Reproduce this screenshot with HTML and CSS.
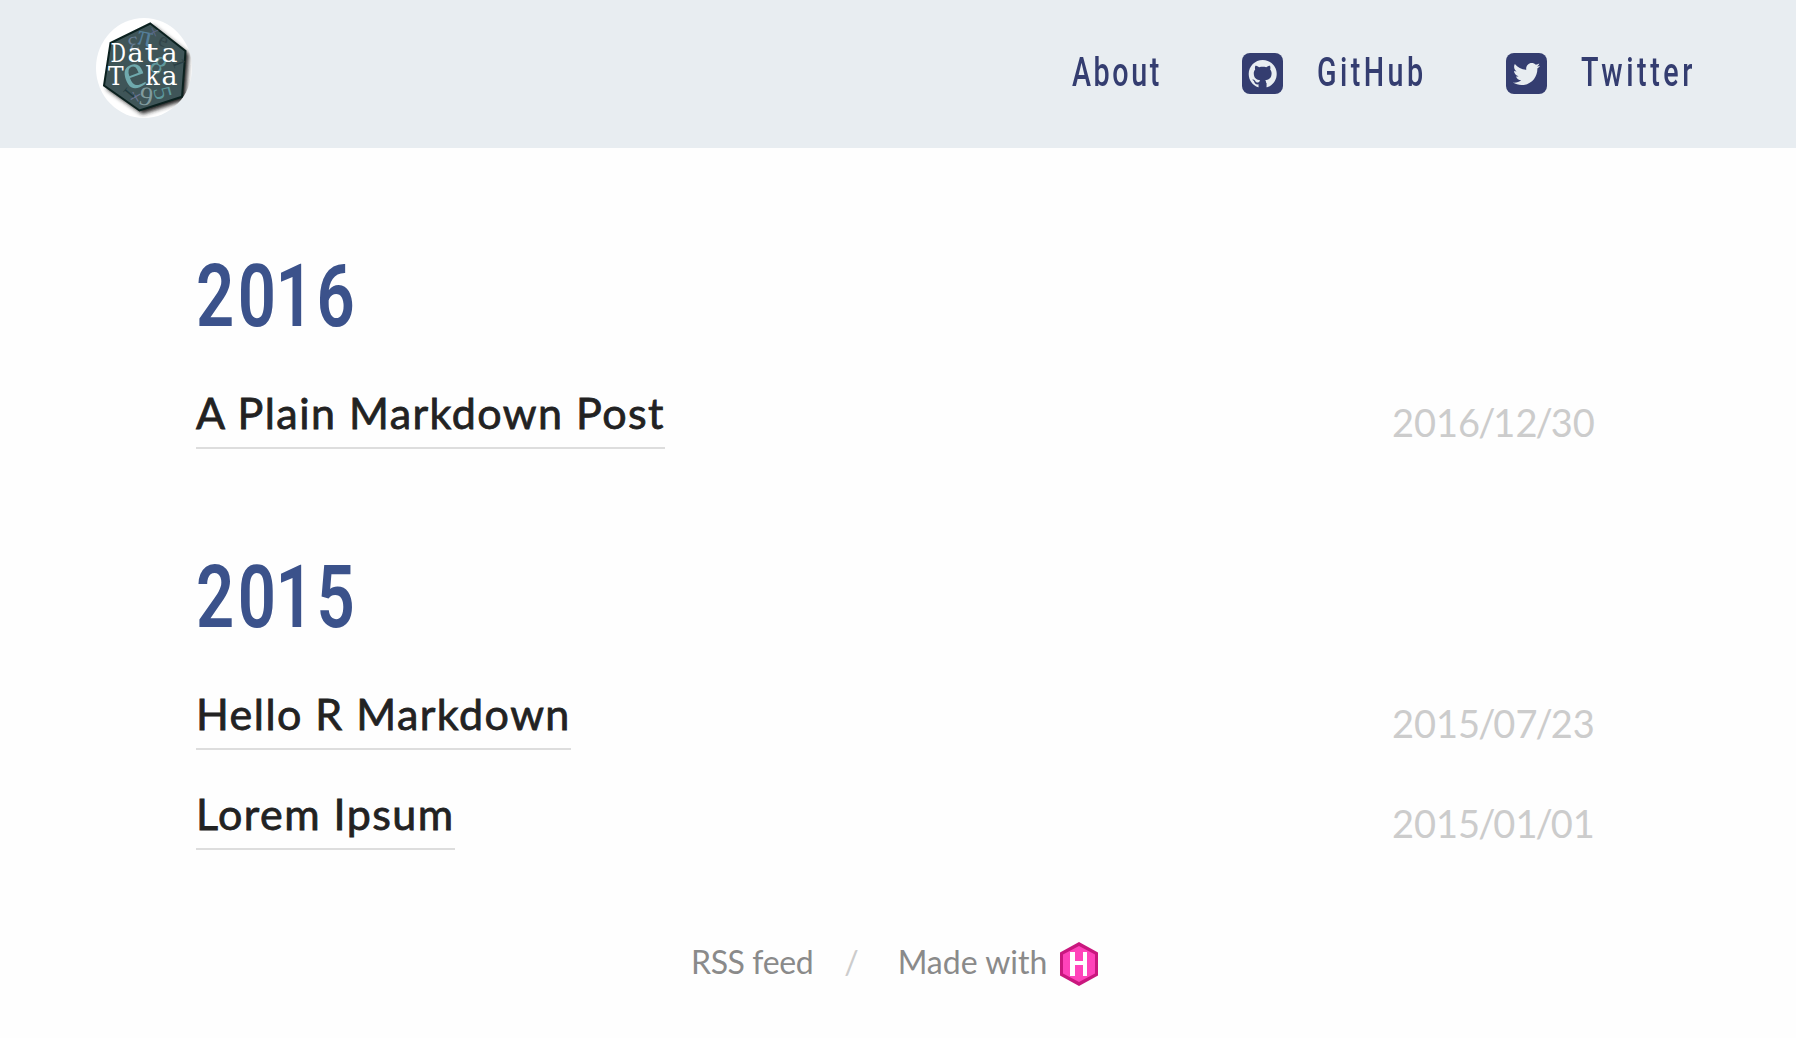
FILE: index.html
```html
<!DOCTYPE html>
<html lang="en">
<head>
<meta charset="utf-8">
<title>Data Teka</title>
<link rel="stylesheet" href="styles.css">
</head>
<body>
<header class="site-header">
  <a class="logo" aria-label="Data Teka">
    <svg width="96" height="100" viewBox="0 0 96 100">
      <defs>
        <filter id="soft" x="-20%" y="-20%" width="150%" height="150%"><feGaussianBlur stdDeviation="2"/></filter>
        <clipPath id="disc"><ellipse cx="48" cy="50" rx="48" ry="50"/></clipPath>
      </defs>
      <g clip-path="url(#disc)">
        <rect width="96" height="100" fill="#fff"/>
        <path d="M54 5 90 33 86.500 79 43.500 93 8 68 14.500 25Z" fill="#222" filter="url(#soft)" transform="translate(3 3)"/>
        <path d="M54.300 5.500 89.500 33 86 78.800 43.500 92.500 8 67.500 14.500 25Z" fill="#3f5558" stroke="#0b211f" stroke-width="2"/>
        <g font-family="Liberation Serif, serif">
          <text transform="translate(40 26) rotate(12)" font-size="30" fill="#557f9b">π</text>
          <text transform="translate(41 18) rotate(165)" font-size="21" fill="#687f96">3</text>
          <text transform="translate(51 18) rotate(20)" font-size="18" fill="#5b6686">×</text>
          <text transform="translate(61 26) rotate(25)" font-size="20" fill="#314448">e</text>
          <text transform="translate(52 50) rotate(38)" font-size="26" fill="#5f999d">8</text>
          <text transform="translate(76 43) rotate(70)" font-size="18" fill="#2b4045">1</text>
          <text transform="translate(42 86) rotate(10)" font-size="27" fill="#819b9e">9</text>
          <text transform="translate(57 71) rotate(75)" font-size="25" fill="#5d989c">5</text>
          <text transform="translate(32 84) rotate(15)" font-size="21" fill="#6c7594">×</text>
          <text transform="translate(32 68) rotate(130)" font-size="18" fill="#213b40">1</text>
          <text transform="translate(32 73) rotate(-20)" font-size="50" fill="#6fa9ad">e</text>
        </g>
        <g class="logo-word">
          <text transform="translate(14.500 44) scale(.82 1)">D</text>
          <text transform="translate(31.500 44) scale(1.150 1)">a</text>
          <text transform="translate(48.500 44) scale(1.500 1)">t</text>
          <text transform="translate(65.500 44) scale(1.150 1)">a</text>
          <text transform="translate(12 67)">T</text>
          <text transform="translate(49.500 67)">k</text>
          <text transform="translate(65.500 67) scale(1.150 1)">a</text>
        </g>
      </g>
    </svg>
  </a>
  <nav class="nav">
    <a class="nav-link about"><span class="condensed">About</span></a>
    <a class="nav-link github">
      <svg width="41" height="41" viewBox="0 0 41 41"><rect width="41" height="41" rx="8" fill="#343d70"/><path transform="translate(6.700 6.700) scale(1.167)" fill="#e8edf1" d="M12 .297c-6.630 0-12 5.373-12 12 0 5.303 3.438 9.800 8.205 11.385.6.113.82-.258.82-.577 0-.285-.01-1.040-.015-2.040-3.338.724-4.042-1.610-4.042-1.610C4.422 18.070 3.633 17.700 3.633 17.700c-1.087-.744.084-.729.084-.729 1.205.084 1.838 1.236 1.838 1.236 1.070 1.835 2.809 1.305 3.495.998.108-.776.417-1.305.76-1.605-2.665-.3-5.466-1.332-5.466-5.930 0-1.310.465-2.380 1.235-3.220-.135-.303-.54-1.523.105-3.176 0 0 1.005-.322 3.300 1.230.96-.267 1.980-.399 3-.405 1.020.006 2.040.138 3 .405 2.280-1.552 3.285-1.230 3.285-1.230.645 1.653.24 2.873.12 3.176.765.84 1.230 1.910 1.230 3.220 0 4.610-2.805 5.625-5.475 5.920.42.36.81 1.096.81 2.220 0 1.606-.015 2.896-.015 3.286 0 .315.21.69.825.57C20.565 22.092 24 17.592 24 12.297c0-6.627-5.373-12-12-12"/><path d="M16.500 33 16.700 35H24.300L24.500 33V30H16.500Z" fill="#343d70"/></svg>
      <span class="condensed">GitHub</span>
    </a>
    <a class="nav-link twitter">
      <svg width="41" height="41" viewBox="0 0 41 41"><rect width="41" height="41" rx="8" fill="#343d70"/><path transform="translate(7 7.500) scale(1.130)" fill="#e8edf1" d="M23.954 4.569c-.885.389-1.830.654-2.825.775 1.014-.611 1.794-1.574 2.163-2.723-.951.555-2.005.959-3.127 1.184-.896-.959-2.173-1.559-3.591-1.559-2.717 0-4.920 2.203-4.920 4.917 0 .39.045.765.127 1.124C7.691 8.094 4.066 6.130 1.640 3.161c-.427.722-.666 1.561-.666 2.475 0 1.710.87 3.213 2.188 4.096-.807-.026-1.566-.248-2.228-.616v.061c0 2.385 1.693 4.374 3.946 4.827-.413.111-.849.171-1.296.171-.314 0-.615-.03-.916-.086.631 1.953 2.445 3.377 4.604 3.417-1.680 1.319-3.809 2.105-6.102 2.105-.39 0-.779-.023-1.170-.067 2.189 1.394 4.768 2.209 7.557 2.209 9.054 0 13.999-7.496 13.999-13.986 0-.209 0-.42-.015-.63.961-.689 1.800-1.560 2.460-2.548l-.047-.02z"/></svg>
      <span class="condensed">Twitter</span>
    </a>
  </nav>
</header>
<main class="archive">
  <section class="year">
    <h1><span class="condensed">20<span class="one">1</span>6</span></h1>
    <ul>
      <li><a>A Plain Markdown Post</a><time>2016<i>/</i>12<i>/</i>30</time></li>
    </ul>
  </section>
  <section class="year">
    <h1><span class="condensed">20<span class="one">1</span>5</span></h1>
    <ul>
      <li><a>Hello R Markdown</a><time>2015<i>/</i>07<i>/</i>23</time></li>
      <li><a>Lorem Ipsum</a><time>2015<i>/</i>01<i>/</i>01</time></li>
    </ul>
  </section>
</main>
<footer class="site-footer">
  <a class="rss">RSS feed</a><span class="slash">/</span><a>Made with</a>
  <svg class="hugo" width="38" height="44" viewBox="0 0 38 44"><path d="M19 0 38 10.500V33.500L19 44 0 33.500V10.500Z" fill="#c9177e"/><path d="M19 4 35 12.500V31.500L19 40 3 31.500V12.500Z" fill="#ff43ba"/><path d="M10 10h5v9h8v-9h4v24h-4V23h-8v11h-5Z" fill="#fff"/></svg>
</footer>
</body>
</html>
```
FILE: styles.css
```css
* { box-sizing: border-box; }

body {
  margin: 0;
  background: #fefefe;
  font-family: Lato, sans-serif;
  color: #222;
}

.site-header {
  height: 148px;
  padding: 18px 102px 0 96px;
  background: #e8edf1;
  display: flex;
  justify-content: space-between;
}

.logo { display: block; height: 100px; }
.logo svg { display: block; }

.logo-word {
  font-family: "DejaVu Serif", serif;
  font-stretch: condensed;
  font-size: 26px;
  fill: #fff;
}

.nav { display: flex; height: 111px; color: #343d70; }

.nav-link { display: flex; align-items: center; }
.nav-link svg { flex: none; }

.condensed {
  display: inline-block;
  font-family: Roboto, sans-serif;
  transform-origin: 0 50%;
  white-space: nowrap;
}

.nav .condensed {
  margin-bottom: 4px;
  font-size: 41px;
  line-height: 48px;
  font-weight: 500;
  transform: scaleX(.7);
}

.about { width: 170px; letter-spacing: 3.7px; }
.github { width: 264px; letter-spacing: 4.9px; }
.twitter { width: 188px; letter-spacing: 5.1px; }
.github .condensed, .twitter .condensed { margin-left: 34px; }

.archive { padding: 97px 196px 0; }

h1 {
  margin: 0;
  height: 100px;
  font-size: 87px;
  line-height: 95px;
  font-weight: 600;
  color: #3b528b;
}

h1 .condensed { letter-spacing: 4.5px; transform: scaleX(.77); }
.one { margin: 0 -1px 0 -5px; }

.year { margin-bottom: 65px; }
.year:last-child { margin-bottom: 60px; }

ul { list-style: none; margin: 36px 0 0; padding: 0; }

li {
  display: flex;
  justify-content: space-between;
  height: 100px;
}

li a {
  height: 68px;
  font-size: 43px;
  line-height: 63px;
  -webkit-text-stroke: .8px #222;
  letter-spacing: 1.46px;
  border-bottom: 2px solid #ddd;
}

time {
  width: 208px;
  font-size: 38px;
  line-height: 83px;
  color: #ccc;
}

time i { font-style: normal; margin: 0 -2px; }

.site-footer {
  display: flex;
  align-items: center;
  height: 44px;
  padding-left: 691px;
  font-size: 32px;
  color: #8a8a8a;
  white-space: nowrap;
}

.site-footer a, .slash { margin-bottom: 5px; }
.rss { letter-spacing: -.4px; }
.slash { color: #ccc; margin-left: 31px; margin-right: 39px; }
.hugo { margin-left: 13px; }
```
